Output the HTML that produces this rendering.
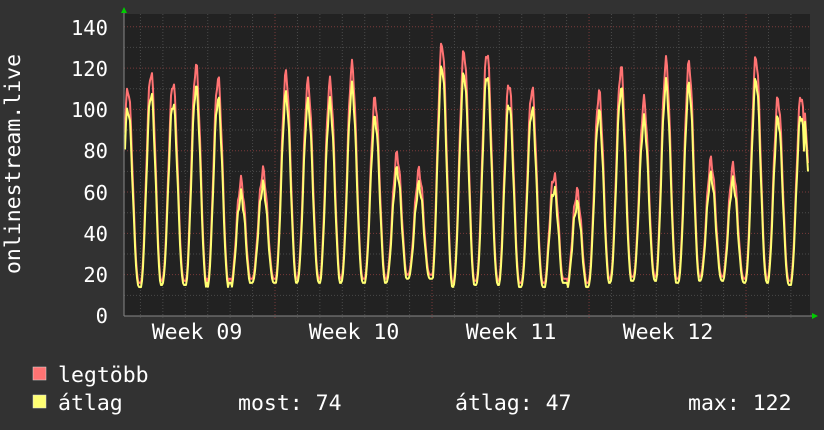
<!DOCTYPE html><html><head><meta charset="utf-8"><style>
html,body{margin:0;padding:0;background:#333;width:824px;height:430px;overflow:hidden}
svg{display:block}
text{font-family:"DejaVu Sans Mono","Liberation Mono",monospace;fill:#fff}
</style></head><body>
<svg id="s" width="824" height="430" xmlns="http://www.w3.org/2000/svg">
<rect width="824" height="430" fill="#323232"/>
<rect x="124" y="14" width="686" height="302" fill="#222"/>
<g id="grid"></g>
<path id="red" fill="none" stroke="#ff7373" stroke-width="2" stroke-linejoin="round"/>
<path id="yel" fill="none" stroke="#ffff73" stroke-width="2" stroke-linejoin="round"/>
<line x1="124" y1="316" x2="812" y2="316" stroke="#888"/>
<line x1="124" y1="12" x2="124" y2="316" stroke="#888"/>
<polygon points="121,13 127,13 124,7" fill="#0c0"/>
<polygon points="812,313 812,319 818,316" fill="#0c0"/>
<g font-size="20.5" text-anchor="end">
<text x="108" y="323">0</text><text x="108" y="282">20</text><text x="108" y="241">40</text><text x="108" y="200">60</text><text x="108" y="158">80</text><text x="108" y="117">100</text><text x="108" y="76">120</text><text x="108" y="35">140</text>
</g>
<text transform="translate(20,164) rotate(-90)" font-size="21.5" text-anchor="middle">onlinestream.live</text>
<g font-size="21.5" text-anchor="middle">
<text x="197" y="339">Week 09</text><text x="354" y="339">Week 10</text><text x="511" y="339">Week 11</text><text x="668" y="339">Week 12</text>
</g>
<rect x="33" y="367" width="13" height="13" fill="#ff7373" stroke="#ddd" stroke-width="0.5"/>
<rect x="33" y="395" width="13" height="13" fill="#ffff73" stroke="#ddd" stroke-width="0.5"/>
<g font-size="21.5">
<text x="58" y="382">legtöbb</text>
<text x="58" y="410">átlag</text>
<text x="238" y="410">most: 74</text>
<text x="455" y="410">átlag: 47</text>
<text x="688" y="410">max: 122</text>
</g>
</svg>
<script>
var g=document.getElementById('grid'),h='';
function Y(v){return 316-v*2.066;}
for(var v=10;v<=140;v+=10){var y=Y(v);h+='<line x1="124" x2="810" y1="'+y+'" y2="'+y+'" stroke="'+(v%20==0?'#7a3a3a':'#4a4a4a')+'" stroke-dasharray="1,2"/>';}
for(var k=0;k<32;k++){var x=118+22.43*k;if(x<125||x>809)continue;var wk=(k%7==0);h+='<line y1="14" y2="318" x1="'+x+'" x2="'+x+'" stroke="'+(wk?'#7a3a3a':'#4a4a4a')+'" stroke-dasharray="1,2"/>';}
g.innerHTML=h;
var px=[128,151,173,196,218,241,263,286,308,330,352,375,397,419,442,464,487,509,532,554,577,599,621,644,666,689,711,733,756,778,801];
var pk=[110,118,113,121,115,65,70,117,113,113,121,105,78,70,132,128,128,113,110,68,60,108,120,104,123,122,75,72,125,105,107];
var mn=[16,14,17,15,15,14,18,17,18,16,18,17,18,20,15,16,17,15,16,13,14,16,18,19,17,18,19,18,18,17,16];
function val(x,sc,mo){var best=0;for(var i=0;i<px.length;i++){var d=(x-px[i])/22.43;if(Math.abs(d)>0.6)continue;var f=Math.pow(Math.max(0,Math.cos(d*Math.PI*1.0)),2.5);var v=mn[i]+(pk[i]*sc-mn[i])*f+mo*Math.sin(x*1.7)*f;if(v>best)best=v;}if(best<mn[0])best=18;return best;}
var r='',yl='';
for(var x=125;x<=808;x++){var a=val(x,1,3),b=val(x,0.93,3);if(x>=805){a=74+(808-x)*8;b=72+(808-x)*8;}
r+=(x==125?'M':'L')+x+','+Y(a).toFixed(1);yl+=(x==125?'M':'L')+x+','+Y(b-2).toFixed(1);}
document.getElementById('red').setAttribute('d',r);document.getElementById('yel').setAttribute('d',yl);
</script>
</body></html>
